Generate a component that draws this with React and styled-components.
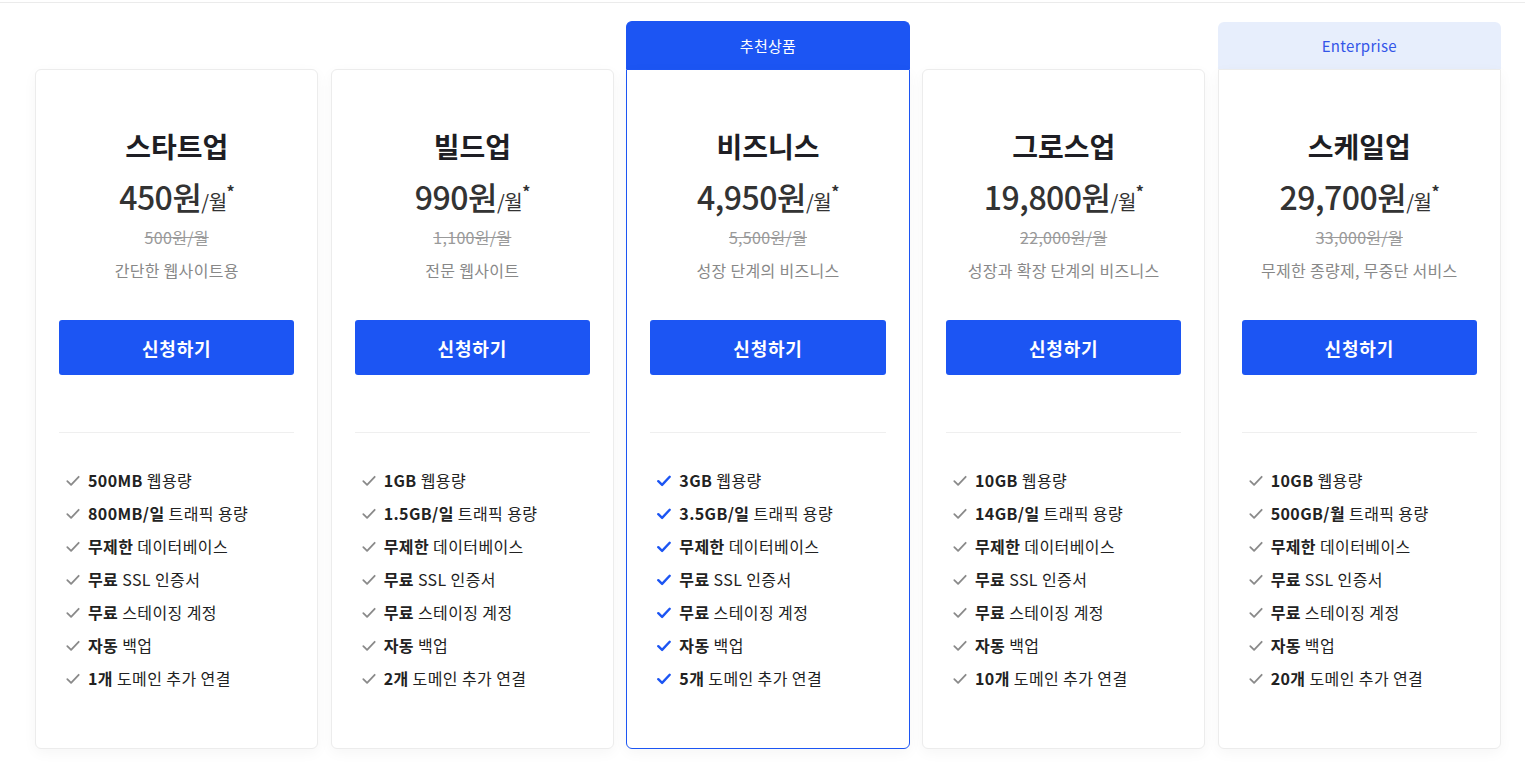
import styled, { createGlobalStyle } from 'styled-components';

/* 요금제 카드 데이터 */
const PLANS = [
  {
    name: '스타트업', price: '450', old: '500원/월', desc: '간단한 웹사이트용',
    features: [['500MB', ' 웹용량'], ['800MB/일', ' 트래픽 용량'], ['무제한', ' 데이터베이스'], ['무료', ' SSL 인증서'], ['무료', ' 스테이징 계정'], ['자동', ' 백업'], ['1개', ' 도메인 추가 연결']],
  },
  {
    name: '빌드업', price: '990', old: '1,100원/월', desc: '전문 웹사이트',
    features: [['1GB', ' 웹용량'], ['1.5GB/일', ' 트래픽 용량'], ['무제한', ' 데이터베이스'], ['무료', ' SSL 인증서'], ['무료', ' 스테이징 계정'], ['자동', ' 백업'], ['2개', ' 도메인 추가 연결']],
  },
  {
    name: '비즈니스', price: '4,950', old: '5,500원/월', desc: '성장 단계의 비즈니스', badge: '추천상품', variant: 'featured',
    features: [['3GB', ' 웹용량'], ['3.5GB/일', ' 트래픽 용량'], ['무제한', ' 데이터베이스'], ['무료', ' SSL 인증서'], ['무료', ' 스테이징 계정'], ['자동', ' 백업'], ['5개', ' 도메인 추가 연결']],
  },
  {
    name: '그로스업', price: '19,800', old: '22,000원/월', desc: '성장과 확장 단계의 비즈니스',
    features: [['10GB', ' 웹용량'], ['14GB/일', ' 트래픽 용량'], ['무제한', ' 데이터베이스'], ['무료', ' SSL 인증서'], ['무료', ' 스테이징 계정'], ['자동', ' 백업'], ['10개', ' 도메인 추가 연결']],
  },
  {
    name: '스케일업', price: '29,700', old: '33,000원/월', desc: '무제한 종량제, 무중단 서비스', badge: 'Enterprise', variant: 'enterprise',
    features: [['10GB', ' 웹용량'], ['500GB/월', ' 트래픽 용량'], ['무제한', ' 데이터베이스'], ['무료', ' SSL 인증서'], ['무료', ' 스테이징 계정'], ['자동', ' 백업'], ['20개', ' 도메인 추가 연결']],
  },
];

const BLUE = '#1c55f3';

const GlobalStyle = createGlobalStyle`
  body {
    margin: 0;
    background: #fff;
    font-family: "Noto Sans CJK KR", "Noto Sans", sans-serif;
    color: #222;
  }
`;

function Check({ $active }) {
  return (
    <CheckIcon viewBox="0 0 14 12" $active={$active}>
      <path d="M1.3 6.2 L5.1 9.9 L12.7 1.8" />
    </CheckIcon>
  );
}

export default function App() {
  return (
    <>
      <GlobalStyle />
      <TopLine />
      <Row>
        {PLANS.map((p) => (
          <Column key={p.name}>
            {p.badge && <Badge $variant={p.variant}>{p.badge}</Badge>}
            <Card $variant={p.variant}>
              <Title>{p.name}</Title>
              <Price>
                {p.price}원<Per>/월</Per><Star>*</Star>
              </Price>
              <OldPrice>{p.old}</OldPrice>
              <Desc>{p.desc}</Desc>
              <ApplyButton>신청하기</ApplyButton>
              <Divider />
              <FeatureList>
                {p.features.map(([b, rest]) => (
                  <Feature key={b + rest}>
                    <Check $active={p.variant === 'featured'} />
                    <span><strong>{b}</strong>{rest}</span>
                  </Feature>
                ))}
              </FeatureList>
            </Card>
          </Column>
        ))}
      </Row>
    </>
  );
}

const TopLine = styled.div`
  height: 2px;
  border-bottom: 1px solid #ebebeb;
`;

const Row = styled.div`
  display: grid;
  width: 1466px;
  grid-template-columns: repeat(5, 1fr);
  column-gap: 12.3px;
  align-items: end;
  padding: 18px 0 20px 35px;
`;

const Column = styled.div`
  display: flex;
  flex-direction: column;
`;

const Badge = styled.div`
  height: 47px;
  display: flex;
  align-items: center;
  justify-content: center;
  font-size: 15px;
  letter-spacing: 0.3px;
  border-radius: 6px 6px 0 0;
  background: ${({ $variant }) => ($variant === 'featured' ? BLUE : '#e7eefc')};
  color: ${({ $variant }) => ($variant === 'featured' ? '#fff' : '#3355e8')};
  ${({ $variant }) => $variant === 'featured' && `border: 1px solid ${BLUE}; border-bottom: none;`}
`;

const Card = styled.div`
  height: 680px;
  box-sizing: border-box;
  display: flex;
  flex-direction: column;
  align-items: center;
  padding: 56px 23px 0;
  background: #fff;
  border: 1px solid ${({ $variant }) => ($variant === 'featured' ? BLUE : '#ececec')};
  border-radius: ${({ $variant }) => ($variant ? '0 0 6px 6px' : '6px')};
  box-shadow: 0 4px 14px rgba(0, 0, 0, 0.04);
`;

const Title = styled.h3`
  margin: 0;
  font-size: 28px;
  line-height: 40px;
  font-weight: 700;
  color: #1e1e24;
`;

const Price = styled.div`
  margin-top: 8px;
  font-size: 32px;
  line-height: 44px;
  font-weight: 500;
  color: #333;
  letter-spacing: -0.5px;
`;

const Per = styled.span`
  font-size: 20px;
  font-weight: 400;
`;

const Star = styled.sup`
  font-size: 16px;
  font-weight: 700;
  vertical-align: 12px;
  line-height: 0;
`;

const OldPrice = styled.div`
  margin-top: 2px;
  font-size: 16px;
  line-height: 22px;
  letter-spacing: 0.3px;
  color: #9a9a9a;
  text-decoration: line-through;
`;

const Desc = styled.div`
  margin-top: 11px;
  font-size: 16px;
  line-height: 22px;
  letter-spacing: 0.3px;
  color: #888;
`;

const ApplyButton = styled.button`
  margin-top: 39px;
  width: 100%;
  height: 55px;
  border: none;
  border-radius: 3px;
  background: ${BLUE};
  color: #fff;
  font-family: inherit;
  font-size: 18px;
  letter-spacing: 0.8px;
  font-weight: 700;
  cursor: pointer;
`;

const Divider = styled.hr`
  margin: 57px 0 0;
  width: 100%;
  border: none;
  border-top: 1px solid #efefef;
`;

const FeatureList = styled.ul`
  list-style: none;
  margin: 30px 0 0;
  padding: 0 0 0 7px;
  align-self: stretch;
`;

const Feature = styled.li`
  display: flex;
  align-items: center;
  gap: 8px;
  height: 33px;
  font-size: 16px;
  letter-spacing: 0.4px;
  color: #222;

  strong {
    font-weight: 700;
  }
`;

const CheckIcon = styled.svg`
  width: 14px;
  height: 12px;
  flex-shrink: 0;
  margin-top: 3px;
  fill: none;
  stroke: ${({ $active }) => ($active ? BLUE : '#8a8a8a')};
  stroke-width: ${({ $active }) => ($active ? 2.4 : 1.8)};
  stroke-linecap: round;
  stroke-linejoin: round;
`;
